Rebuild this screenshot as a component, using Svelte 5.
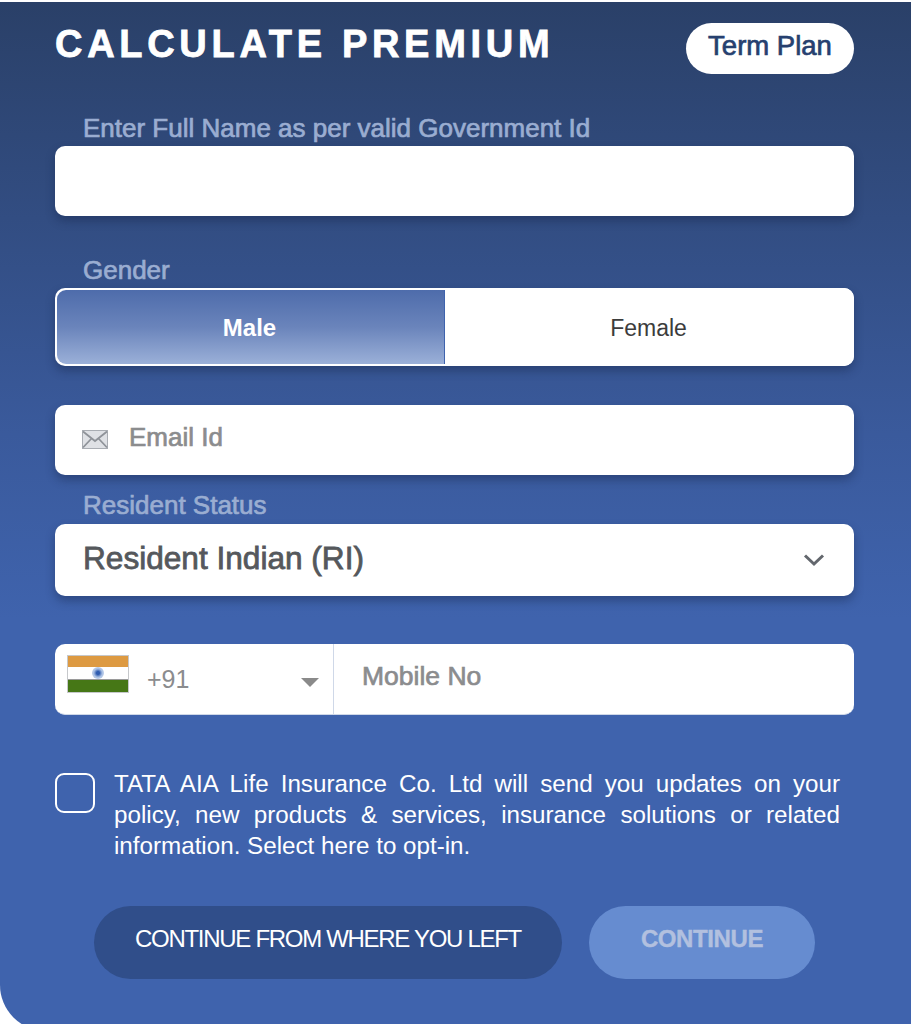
<script>
  let gender = $state('Male');
  let optIn = $state(false);
</script>

<div class="page">
  <div class="panel">
    <header class="head">
      <h1>CALCULATE PREMIUM</h1>
      <span class="pill">Term Plan</span>
    </header>

    <div class="label first">Enter Full Name as per valid Government Id</div>
    <div class="field name"></div>

    <div class="label gender-label">Gender</div>
    <div class="toggle">
      <button type="button" class="opt" class:on={gender === 'Male'} onclick={() => (gender = 'Male')}>Male</button>
      <button type="button" class="opt" class:on={gender === 'Female'} onclick={() => (gender = 'Female')}>Female</button>
    </div>

    <div class="field email">
      <svg class="mail" width="26" height="19" viewBox="0 0 26 19" aria-hidden="true">
        <rect x="0.5" y="0.5" width="25" height="18" fill="#dfe1e5" stroke="#a9adb3" />
        <path d="M1 1.5 13 11 25 1.5M1 17.5 9.5 8.5M25 17.5 16.5 8.5" fill="none" stroke="#8f9399" stroke-width="1.8" />
      </svg>
      <span class="ph email-ph">Email Id</span>
    </div>

    <div class="label status-label">Resident Status</div>
    <div class="field select">
      <span class="select-value">Resident Indian (RI)</span>
      <svg width="22" height="14" viewBox="0 0 22 14" aria-hidden="true">
        <path d="M2 2.5 11 11 20 2.5" fill="none" stroke="#63676d" stroke-width="3" />
      </svg>
    </div>

    <div class="phone">
      <div class="code">
        <div class="flag">
          <i class="saffron"></i>
          <i class="white"><b></b></i>
          <i class="green"></i>
        </div>
        <span class="cc">+91</span>
        <span class="caret"></span>
      </div>
      <span class="ph mobile">Mobile No</span>
    </div>

    <div class="consent">
      <button type="button" class="check" aria-label="opt in" aria-pressed={optIn} onclick={() => (optIn = !optIn)}></button>
      <p>TATA AIA Life Insurance Co. Ltd will send you updates on your policy, new products &amp; services, insurance solutions or related information. Select here to opt-in.</p>
    </div>

    <div class="actions">
      <button type="button" class="btn resume">CONTINUE FROM WHERE YOU LEFT</button>
      <button type="button" class="btn next" disabled>CONTINUE</button>
    </div>
  </div>
</div>

<style>
  :global(body) {
    margin: 0;
    background: #fff;
  }

  .page {
    height: 1024px;
    padding-top: 2px;
    box-sizing: border-box;
    overflow: hidden;
  }

  .panel {
    box-sizing: border-box;
    width: 911px;
    height: 1029px;
    padding: 21px 57px 0 55px;
    border-bottom-left-radius: 46px;
    background: linear-gradient(180deg, #2a4068 0%, #3a5a9c 42%, #3f63ad 60%, #3f63ad 100%);
    font-family: "Liberation Sans", Arial, sans-serif;
  }

  .head {
    display: flex;
    justify-content: space-between;
    align-items: flex-start;
    height: 51px;
  }

  h1 {
    margin: 0;
    color: #fff;
    font-size: 38px;
    line-height: 42px;
    font-weight: 700;
    letter-spacing: 4.7px;
    -webkit-text-stroke: 0.8px #fff;
  }

  .pill {
    display: flex;
    align-items: center;
    justify-content: center;
    box-sizing: border-box;
    width: 168px;
    height: 51px;
    padding-bottom: 6px;
    border-radius: 26px;
    background: #fff;
    color: #26406f;
    font-size: 27.5px;
    -webkit-text-stroke: 0.7px #26406f;
  }

  .label {
    padding-left: 28px;
    color: #9aadd1;
    font-size: 26px;
    line-height: 28px;
    -webkit-text-stroke: 0.7px #9aadd1;
  }

  .first { margin-top: 40px; }
  .gender-label { margin-top: 40px; }
  .status-label { margin-top: 16px; }

  .field {
    display: flex;
    align-items: center;
    box-sizing: border-box;
    border-radius: 10px;
    background: #fff;
    box-shadow: 0 5px 10px rgba(20, 35, 70, 0.4);
  }

  .name { height: 70px; margin-top: 4px; }

  .toggle {
    display: flex;
    height: 78px;
    margin-top: 4px;
    border-radius: 10px;
    background: #fff;
    box-shadow: 0 5px 10px rgba(20, 35, 70, 0.4);
    overflow: hidden;
  }

  .opt {
    flex: 1;
    padding: 2px 2px 0 0;
    border: 0;
    background: #fff;
    color: #3c3c3c;
    font: inherit;
    font-size: 23px;
  }

  .opt.on {
    flex: 0 0 388px;
    box-sizing: border-box;
    margin: 2px 0 2px 2px;
    border-right: 1px solid #3f63ad;
    border-radius: 9px 0 0 9px;
    background: linear-gradient(180deg, #4e6cab 0%, #6a84bb 50%, #9bb0d8 100%);
    color: #fff;
    font-size: 24px;
    font-weight: 700;
  }

  .email {
    height: 70px;
    margin-top: 39px;
    padding-left: 27px;
  }

  .mail { margin: -1px 21px 0 0; }

  .ph {
    color: #8b8c8e;
    -webkit-text-stroke: 0.7px #8b8c8e;
  }

  .email-ph {
    margin-top: -6px;
    font-size: 26px;
  }

  .select {
    justify-content: space-between;
    height: 72px;
    margin-top: 5px;
    padding: 0 29px 0 28px;
    color: #55585c;
    font-size: 31.6px;
    -webkit-text-stroke: 0.8px #55585c;
  }

  .select-value { margin-top: -4px; }

  .phone {
    display: flex;
    align-items: center;
    box-sizing: border-box;
    height: 71px;
    margin-top: 48px;
    border-radius: 10px;
    border-bottom: 1px solid #cfd8e8;
    background: #fff;
  }

  .code {
    position: relative;
    display: flex;
    align-items: center;
    box-sizing: border-box;
    flex: 0 0 279px;
    height: 100%;
    padding-left: 12px;
    border-right: 1px solid #cfd8e8;
  }

  .flag {
    display: flex;
    flex-direction: column;
    flex: none;
    box-sizing: border-box;
    width: 62px;
    height: 38px;
    margin: -11px 18px 0 0;
    border: 1px solid #c6c8cb;
  }

  .flag i {
    display: flex;
    flex: 1;
    align-items: center;
    justify-content: center;
  }

  .saffron { background: #dd9a42; }
  .white { background: #fff; border-bottom: 1px solid #9a9a9a; }
  .green { background: #467716; }

  .flag b {
    width: 12px;
    height: 12px;
    border-radius: 50%;
    background: radial-gradient(circle, #2f5cb0 0 18%, #a9c0e4 50%, #d3deef 100%);
  }

  .cc {
    color: #8b8c8e;
    font-size: 25px;
  }

  .caret {
    position: absolute;
    right: 14px;
    top: 34px;
    border-style: solid;
    border-width: 9px 9px 0;
    border-color: #8a8a8a transparent transparent;
  }

  .mobile {
    margin: -5px 0 0 28px;
    font-size: 26.5px;
  }

  .consent {
    display: flex;
    align-items: flex-start;
    margin-top: 54px;
    gap: 19px;
    padding-right: 14px;
  }

  .check {
    flex: none;
    box-sizing: border-box;
    width: 40px;
    height: 40px;
    margin-top: 4px;
    padding: 0;
    border: 2px solid #fff;
    border-radius: 9px;
    background: transparent;
  }

  p {
    margin: -1px 0 0;
    color: #fff;
    font-size: 24.2px;
    line-height: 31px;
    text-align: justify;
  }

  .actions {
    display: flex;
    gap: 27px;
    margin-top: 45px;
    padding-left: 39px;
  }

  .btn {
    height: 73px;
    padding: 0 0 8px;
    border: 0;
    border-radius: 37px;
    font: inherit;
    font-size: 24px;
  }

  .resume {
    width: 468px;
    background: #304e8a;
    color: #fff;
    letter-spacing: -1.3px;
  }

  .next {
    width: 226px;
    background: #668cd0;
    color: #b2c0df;
    font-weight: 700;
    letter-spacing: -0.4px;
    -webkit-text-stroke: 0.4px #b2c0df;
  }
</style>
